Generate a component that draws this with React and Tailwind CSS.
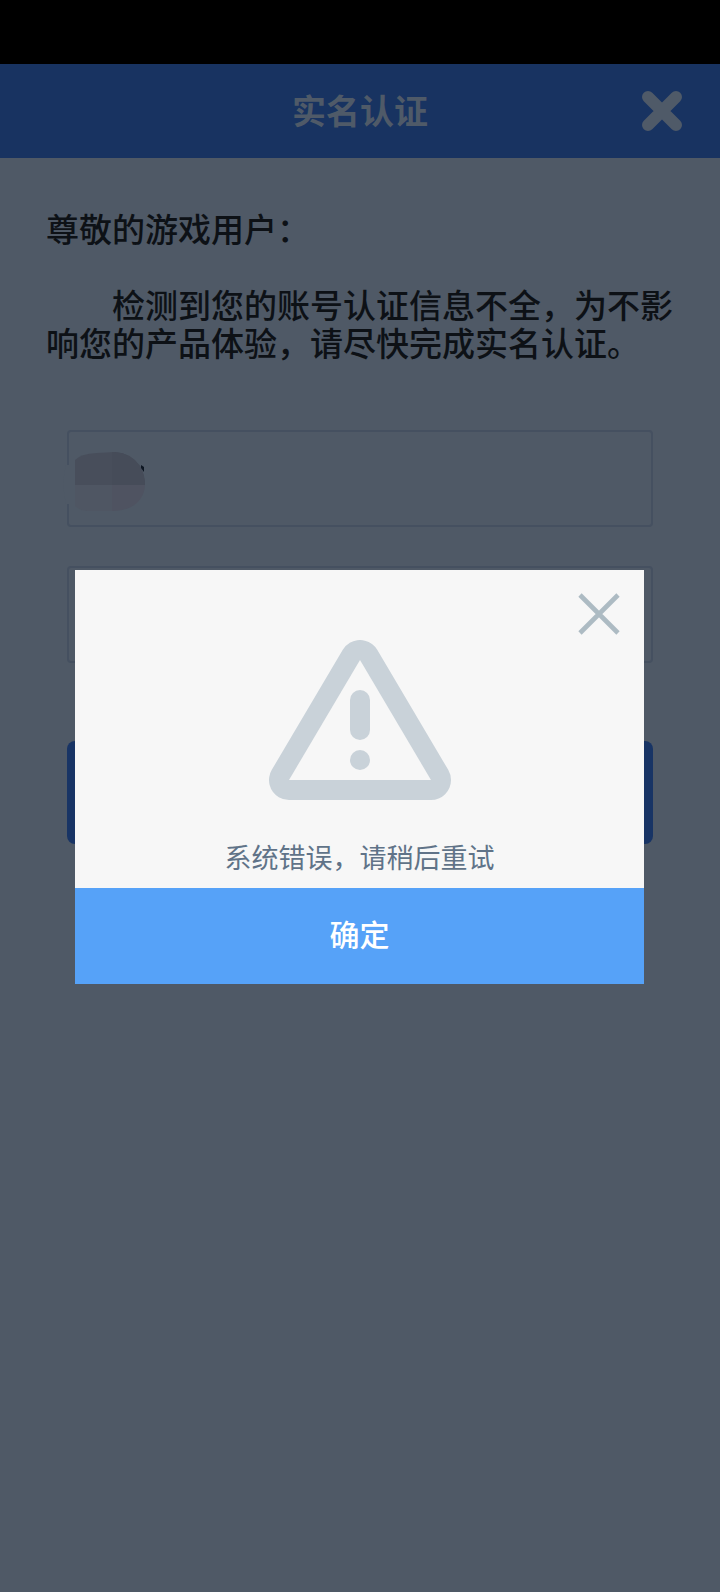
import { useState } from "react";

const CloseIcon = () => (
  <svg viewBox="0 0 40 40" className="w-10 h-10" aria-hidden="true">
    <path d="M6 6 34 34M34 6 6 34" fill="none" stroke="#4f5a68" strokeWidth="12" strokeLinecap="round" />
  </svg>
);

const ThinCloseIcon = () => (
  <svg viewBox="0 0 42 42" className="w-[42px] h-[42px]" aria-hidden="true">
    <path d="M2 2 40 40M40 2 2 40" fill="none" stroke="#adbbc3" strokeWidth="4.6" />
  </svg>
);

const WarningIcon = () => (
  <svg viewBox="0 0 182 160" className="w-[182px] h-40" aria-hidden="true">
    <path d="M91 20 20 140H162Z" fill="#c9d2d9" stroke="#c9d2d9" strokeWidth="40" strokeLinejoin="round" />
    <path d="M91 20 20 140H162Z" fill="#f7f7f7" />
    <rect x="81" y="50" width="20" height="50" rx="10" fill="#c9d2d9" />
    <circle cx="91" cy="120" r="10" fill="#c9d2d9" />
  </svg>
);

const MaskedName = () => (
  <svg viewBox="0 0 84 68" className="absolute -left-1 top-5 w-[84px] h-[68px]" aria-hidden="true">
    <path d="M3 15H30V54H3Q-2 34 3 15Z" fill="#4f5966" />
    <path d="M12 10Q17 4 34 3L52 2Q68 3 77 16Q82 25 82 35H12Z" fill="#484e5b" />
    <path d="M49 2H52Q68 3 77 16Q82 25 82 35H49Z" fill="#464c59" />
    <path d="M12 35H49V61H24Q16 60 12 56Z" fill="#4f5663" />
    <path d="M49 35H82Q81 50 68 57Q60 61 49 61Z" fill="#4f5361" />
    <path d="M78 15 81 17V22L78 18Z" fill="#0d1622" />
  </svg>
);

const ErrorModal = ({ message, onClose }) => (
  <div className="absolute inset-x-0 top-[570px] pl-[75px] pr-[76px]">
    <div role="alertdialog" aria-label={message} className="relative bg-[#f7f7f7]">
      <button type="button" aria-label="关闭" onClick={onClose} className="absolute right-6 top-[23px]">
        <ThinCloseIcon />
      </button>
      <div className="flex flex-col items-center pt-[70px] pb-[13px]">
        <WarningIcon />
        <p className="mt-[39px] text-[27px] leading-9 text-[#607388]">{message}</p>
      </div>
      <button
        type="button"
        onClick={onClose}
        className="w-full h-24 pb-1.5 bg-[#56a2f8] text-[30px] font-medium text-white"
      >
        确定
      </button>
    </div>
  </div>
);

export default function App() {
  const [showError, setShowError] = useState(true);
  const [name, setName] = useState("");
  const [idCard, setIdCard] = useState("");

  return (
    <div className="relative min-h-screen bg-[#4f5966] font-['Noto_Sans_CJK_SC',sans-serif]">
      <div className="h-16 bg-black" />
      <header className="relative flex h-[94px] items-center justify-center bg-[#183361]">
        <h1 className="pb-1 text-[34px] font-bold text-[#4f5a68]">实名认证</h1>
        <button type="button" aria-label="关闭" className="absolute right-[38px]">
          <CloseIcon />
        </button>
      </header>

      <main>
        <div className="pl-[46px] pr-10 pt-[51px] text-[33px] leading-[38px] font-medium text-[#0d1116]">
          <p>尊敬的游戏用户：</p>
          <p className="mt-[38px] indent-[2em]">检测到您的账号认证信息不全，为不影响您的产品体验，请尽快完成实名认证。</p>
        </div>

        <form className="flex flex-col px-[67px] pt-[69px]" onSubmit={(e) => e.preventDefault()}>
          <div className="relative">
            <input
              type="text"
              aria-label="姓名"
              value={name}
              onChange={(e) => setName(e.target.value)}
              className="block w-full h-[97px] rounded-sm border-2 border-[#455060] px-4 text-3xl"
            />
            <MaskedName />
          </div>
          <input
            type="text"
            aria-label="身份证号"
            value={idCard}
            onChange={(e) => setIdCard(e.target.value)}
            className="mt-[39px] block w-full h-[97px] rounded-sm border-2 border-[#455060] px-4 text-3xl"
          />
          <button type="submit" aria-label="提交" className="mt-[78px] h-[103px] rounded-lg bg-[#183465]" />
        </form>
      </main>

      {showError && <ErrorModal message="系统错误，请稍后重试" onClose={() => setShowError(false)} />}
    </div>
  );
}
